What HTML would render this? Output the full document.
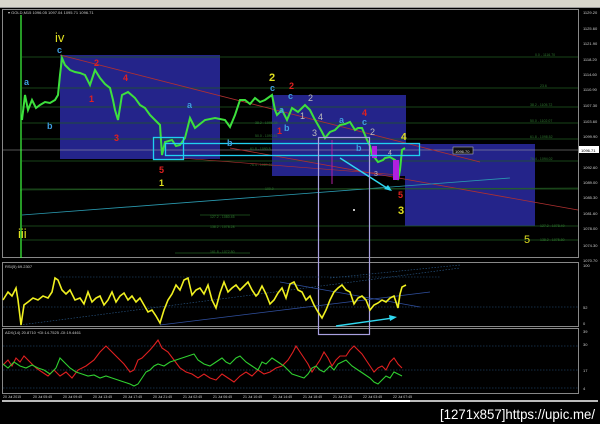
<!DOCTYPE html>
<html><head><meta charset="utf-8"><style>
html,body{margin:0;padding:0;background:#000;width:600px;height:424px;overflow:hidden}
svg{display:block}
text{font-family:"Liberation Sans",sans-serif}
</style></head><body>
<svg width="600" height="424" viewBox="0 0 600 424">
<rect width="600" height="424" fill="#000"/>
<rect x="0" y="0" width="600" height="8" fill="#d8d6cc"/>
<rect x="0" y="7" width="600" height="1" fill="#999"/>
<rect x="2.5" y="9.5" width="576" height="248" fill="none" stroke="#888" stroke-width="1"/>
<rect x="2.5" y="262.5" width="576" height="64" fill="none" stroke="#888" stroke-width="1"/>
<rect x="2.5" y="328.5" width="576" height="65" fill="none" stroke="#888" stroke-width="1"/>
<rect x="2" y="400" width="596" height="2" fill="#bbb"/>
<rect x="380" y="400" width="30" height="2" fill="#fff"/>
<text x="8" y="14" font-size="4" fill="#ccc">▾ GOLD,M15  1096.05  1097.04  1095.71  1096.71</text>
<rect x="60" y="55" width="160" height="104" fill="#24248a"/>
<rect x="272" y="95" width="134" height="81" fill="#24248a"/>
<rect x="405" y="144" width="130" height="82" fill="#24248a"/>
<g stroke="#1f5a1f" stroke-width="0.8">
<line x1="22" y1="57" x2="578" y2="57"/>
<line x1="22" y1="88" x2="578" y2="88"/>
<line x1="22" y1="107" x2="578" y2="107"/>
<line x1="22" y1="123" x2="578" y2="123"/>
<line x1="22" y1="139" x2="578" y2="139"/>
<line x1="22" y1="161" x2="578" y2="161"/>
<line x1="22" y1="189" x2="578" y2="189"/>
<line x1="200" y1="215" x2="250" y2="215"/>
<line x1="22" y1="226" x2="578" y2="226"/>
<line x1="22" y1="240" x2="578" y2="240"/>
<line x1="175" y1="253" x2="250" y2="253"/>
</g>
<line x1="3" y1="150" x2="578" y2="150" stroke="#aaa" stroke-width="0.6"/>
<g font-size="3.5" fill="#2f7a2f">
<text x="535" y="56">0.0 - 1116.70</text><text x="540" y="87">23.6</text>
<text x="530" y="106">38.2 - 1105.72</text><text x="530" y="122">50.0 - 1102.07</text>
<text x="530" y="138">61.8 - 1098.52</text><text x="530" y="160">76.4 - 1094.02</text>
<text x="255" y="124">38.2 - 1096.34</text><text x="255" y="137">50.0 - 1093.81</text>
<text x="250" y="150">61.8 - 1090.8</text><text x="250" y="166">76.4 - 1089.81</text>
<text x="265" y="190">100.0</text><text x="210" y="218">127.2 - 1080.45</text>
<text x="210" y="228">138.2 - 1078.28</text><text x="210" y="253">161.8 - 1072.80</text>
<text x="540" y="227">127.2 - 1078.49</text><text x="540" y="241">138.2 - 1075.80</text>
</g>
<line x1="60" y1="55" x2="480" y2="162" stroke="#b03030" stroke-width="0.8"/>
<line x1="230" y1="148" x2="578" y2="210" stroke="#b03030" stroke-width="0.8"/>
<line x1="180" y1="158" x2="400" y2="175" stroke="#b03030" stroke-width="0.6"/>
<line x1="22" y1="215" x2="510" y2="178" stroke="#2a9ab0" stroke-width="0.8"/>
<line x1="20" y1="190" x2="578" y2="188" stroke="#2a6a2a" stroke-width="0.6"/>
<polyline fill="none" stroke="#3de03d" stroke-width="2" points="22,120 25,95 28,110 32,100 36,108 40,105 45,102 50,103 55,100 58,95 60,75 62,58 65,65 70,70 75,72 80,73 85,75 90,85 95,70 100,78 105,84 110,88 113,100 115,110 118,120 122,95 128,92 135,98 140,105 145,108 150,115 155,120 160,125 162,155 165,142 172,140 176,146 180,145 185,138 190,118 195,128 200,124 205,120 215,118 225,120 230,127 235,115 240,100 245,100 250,104 255,98 260,102 265,100 272,95 275,110 277,115 282,110 287,120 292,108 298,112 305,105 310,110 314,118 318,125 322,132 325,138 330,132 335,130 340,125 345,124 350,122 355,130 358,128 362,128 365,135 367,140 370,146 372,155 375,158 378,162 383,160 385,158 390,157 395,160 398,180 400,170 402,150 405,148"/>
<rect x="372" y="146" width="5" height="12" fill="#b020e0"/>
<rect x="393" y="160" width="6" height="20" fill="#b020e0"/>
<line x1="332" y1="140" x2="332" y2="184" stroke="#b020a0" stroke-width="1"/>
<rect x="153.5" y="137.5" width="30" height="22" fill="none" stroke="#20d0f0" stroke-width="1.3"/>
<rect x="165.5" y="143.5" width="254" height="12" fill="none" stroke="#20d0f0" stroke-width="1.3"/>
<line x1="340" y1="158" x2="390" y2="190" stroke="#30d8f0" stroke-width="1.4"/>
<polygon points="392,191 384,189 388,185" fill="#30d8f0"/>
<rect x="318.5" y="137.5" width="51" height="197" fill="none" stroke="#a8a0e0" stroke-width="1.2"/>
<line x1="21" y1="15" x2="21" y2="258" stroke="#40ff40" stroke-width="1.2"/>
<g font-size="9" font-weight="bold">
<text x="55" y="42" fill="#e0e020" font-size="13" font-weight="normal">iv</text>
<text x="18" y="238" fill="#e0e020" font-size="13" font-weight="normal">iii</text>
<text x="57" y="53" fill="#3f9fe0">c</text>
<text x="24" y="85" fill="#3f9fe0">a</text>
<text x="47" y="129" fill="#3f9fe0">b</text>
<text x="94" y="66" fill="#e02020">2</text>
<text x="123" y="81" fill="#e02020">4</text>
<text x="89" y="102" fill="#e02020">1</text>
<text x="114" y="141" fill="#e02020">3</text>
<text x="187" y="108" fill="#3f9fe0">a</text>
<text x="227" y="146" fill="#3f9fe0">b</text>
<text x="159" y="173" fill="#e02020">5</text>
<text x="159" y="186" fill="#e0e020">1</text>
<text x="269" y="81" fill="#e0e020" font-size="11">2</text>
<text x="270" y="91" fill="#3f9fe0">c</text>
<text x="289" y="89" fill="#e02020">2</text>
<text x="288" y="99" fill="#3f9fe0">c</text>
<text x="279" y="113" fill="#3f9fe0">a</text>
<text x="284" y="131" fill="#3f9fe0">b</text>
<text x="277" y="134" fill="#e02020">1</text>
<text x="308" y="101" fill="#bbb" font-weight="normal">2</text>
<text x="300" y="119" fill="#bbb" font-weight="normal">1</text>
<text x="318" y="120" fill="#bbb" font-weight="normal">4</text>
<text x="312" y="136" fill="#bbb" font-weight="normal">3</text>
<text x="339" y="123" fill="#3f9fe0">a</text>
<text x="362" y="116" fill="#e02020">4</text>
<text x="362" y="125" fill="#3f9fe0">c</text>
<text x="370" y="135" fill="#bbb" font-weight="normal">2</text>
<text x="356" y="151" fill="#3f9fe0">b</text>
<text x="374" y="176" fill="#bbb" font-weight="normal" font-size="7">3</text>
<text x="388" y="155" fill="#bbb" font-weight="normal" font-size="7">4</text>
<text x="401" y="140" fill="#e0e020" font-size="10">4</text>
<text x="398" y="198" fill="#e02020">5</text>
<text x="398" y="214" fill="#e0e020" font-size="11">3</text>
<text x="524" y="243" fill="#e0e020" font-size="11" font-weight="normal">5</text>
</g>
<circle cx="354" cy="210" r="1" fill="#fff"/>
<rect x="453" y="147" width="20" height="7" fill="#111" stroke="#ccc" stroke-width="0.5"/>
<text x="455" y="153" font-size="4" fill="#ddd">1096.70</text>
<g font-size="4" fill="#ccc">
<text x="583" y="14">1129.20</text><text x="583" y="30">1125.60</text><text x="583" y="45">1121.90</text>
<text x="583" y="61">1118.20</text><text x="583" y="76">1114.60</text><text x="583" y="91">1110.90</text>
<text x="583" y="107">1107.30</text><text x="583" y="123">1103.60</text><text x="583" y="138">1099.90</text>
<text x="583" y="169">1092.60</text><text x="583" y="184">1089.00</text><text x="583" y="199">1085.30</text>
<text x="583" y="215">1081.60</text><text x="583" y="230">1078.00</text><text x="583" y="247">1074.30</text>
<text x="583" y="262">1070.70</text>
<text x="583" y="267">100</text><text x="583" y="309">52</text><text x="583" y="325">0</text>
<text x="583" y="333">39</text><text x="583" y="346">30</text><text x="583" y="372">17</text><text x="583" y="390">4</text>
</g>
<rect x="579" y="146" width="20" height="7" fill="#fff"/>
<text x="581" y="152" font-size="4" fill="#000">1096.71</text>
<text x="5" y="268" font-size="4" fill="#ccc">RSI(5) 69.2307</text>
<g stroke="#2a5a8a" stroke-width="0.6" stroke-dasharray="1.5,1.5" fill="none">
<line x1="3" y1="307" x2="578" y2="307"/><line x1="60" y1="277" x2="440" y2="277"/>
<line x1="20" y1="325" x2="460" y2="268"/><line x1="330" y1="278" x2="460" y2="265"/>
</g>
<line x1="160" y1="325" x2="430" y2="292" stroke="#3050a0" stroke-width="0.7"/>
<line x1="280" y1="282" x2="420" y2="307" stroke="#3050a0" stroke-width="0.7"/>
<polyline fill="none" stroke="#f0f020" stroke-width="1.6" points="3,300 8,292 12,296 16,288 18,300 21,325 24,305 28,302 33,298 38,300 43,296 48,298 52,292 55,278 58,280 62,290 66,294 70,290 75,300 80,298 84,304 88,292 92,302 96,298 100,296 104,305 108,300 112,292 116,302 120,296 124,293 128,300 132,296 136,302 140,298 144,305 148,312 152,310 156,316 160,323 164,310 168,300 172,294 176,285 180,290 184,280 188,278 192,295 196,290 200,288 204,294 208,285 212,300 216,308 220,293 224,282 228,292 232,288 236,285 240,290 244,286 248,282 252,290 256,296 258,294 262,286 266,294 270,304 274,300 278,293 282,288 286,298 290,284 294,282 298,290 302,292 306,300 310,296 314,305 318,312 322,318 326,310 330,300 334,292 338,288 342,285 346,290 350,292 354,304 358,298 362,296 366,300 370,310 374,305 378,303 382,300 386,302 390,298 394,296 398,308 400,294 402,287 406,285"/>
<line x1="336" y1="326" x2="393" y2="318" stroke="#30d8f0" stroke-width="1.4"/>
<polygon points="397,317 389,315 390,321" fill="#30d8f0"/>
<text x="5" y="334" font-size="4" fill="#ccc">ADX(14) 20.8710 +DI:14.7525 -DI:19.4461</text>
<g stroke="#2a5a8a" stroke-width="0.6" stroke-dasharray="1.5,1.5">
<line x1="3" y1="346" x2="578" y2="346"/><line x1="3" y1="370" x2="578" y2="370"/><line x1="3" y1="388" x2="578" y2="388"/>
</g>
<polyline fill="none" stroke="#e02020" stroke-width="1.1" points="3,365 8,360 12,366 16,358 20,362 24,356 30,362 36,368 42,372 48,376 54,370 60,376 66,372 72,378 78,370 86,366 94,360 100,352 106,346 112,352 118,358 124,364 130,372 134,370 138,360 142,358 146,354 150,350 155,344 158,340 162,348 168,352 174,360 180,368 186,372 192,374 198,378 204,374 210,378 216,380 222,374 228,378 234,382 240,376 246,372 252,376 258,370 264,374 270,372 276,368 282,366 288,360 293,352 296,346 300,352 304,358 308,364 312,372 316,366 320,360 324,352 328,358 332,366 336,360 340,356 346,356 350,350 354,346 358,350 362,354 366,360 370,366 374,372 378,368 382,366 386,370 390,362 394,358 398,364 402,368"/>
<polyline fill="none" stroke="#30d030" stroke-width="1.1" points="3,364 8,368 14,362 20,366 26,368 32,365 38,368 44,370 50,374 56,368 60,358 64,362 70,368 76,372 82,374 88,376 94,375 100,378 106,376 112,378 118,380 124,382 130,384 134,386 138,384 142,378 146,372 150,370 154,366 158,364 164,366 170,362 176,360 182,358 188,356 194,354 198,360 204,364 210,366 216,362 222,358 226,362 230,364 236,358 240,356 246,362 252,366 258,370 262,362 266,364 272,358 278,362 284,366 288,370 292,374 298,376 304,378 308,374 312,368 316,366 320,370 324,372 330,366 334,370 338,364 342,362 346,360 352,366 358,370 364,374 370,378 374,382 378,384 382,380 386,376 390,378 394,372 398,374 402,376"/>
<g font-size="3.5" fill="#ccc">
<text x="3" y="398">20 Jul 2015</text><text x="33" y="398">20 Jul 05:45</text><text x="63" y="398">20 Jul 09:45</text>
<text x="93" y="398">20 Jul 13:45</text><text x="123" y="398">20 Jul 17:45</text><text x="153" y="398">20 Jul 21:45</text>
<text x="183" y="398">21 Jul 02:45</text><text x="213" y="398">21 Jul 06:45</text><text x="243" y="398">21 Jul 10:45</text>
<text x="273" y="398">21 Jul 14:45</text><text x="303" y="398">21 Jul 18:45</text><text x="333" y="398">21 Jul 22:45</text>
<text x="363" y="398">22 Jul 03:45</text><text x="393" y="398">22 Jul 07:45</text>
</g>
<text x="440" y="419" font-size="14" fill="#fff" textLength="155" lengthAdjust="spacingAndGlyphs">[1271x857]https://upic.me/</text>
</svg>
</body></html>
